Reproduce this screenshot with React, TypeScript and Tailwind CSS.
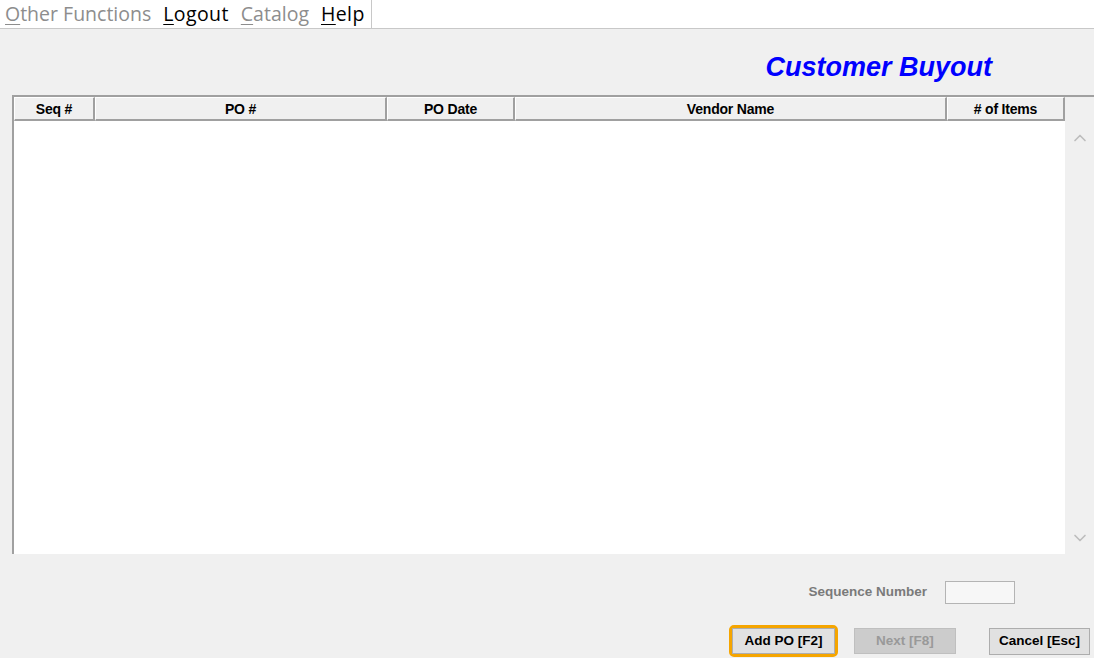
import React from 'react';
import { ChevronUp, ChevronDown } from 'lucide-react';

const menu = [
  { key: 'O', rest: 'ther Functions', enabled: false },
  { key: 'L', rest: 'ogout', enabled: true },
  { key: 'C', rest: 'atalog', enabled: false },
  { key: 'H', rest: 'elp', enabled: true },
];

const columns = [
  { label: 'Seq #', w: 'w-[81px]' },
  { label: 'PO #', w: 'w-[292px]' },
  { label: 'PO Date', w: 'w-[128px]' },
  { label: 'Vendor Name', w: 'w-[432px]' },
  { label: '# of Items', w: 'w-[118px]' },
];

const App: React.FC = () => {
  return (
    <div className="flex h-[658px] w-[1094px] flex-col overflow-hidden bg-[#f0f0f0] font-['Liberation_Sans',Arial,sans-serif]">
      {/* menu bar */}
      <div className="flex h-[29px] shrink-0 items-center border-b border-[#c8c8c8] bg-white font-['Open_Sans',sans-serif] text-[19.5px]">
        <div className="flex h-full items-center gap-[12px] border-r border-[#c8c8c8] pr-[6px] pl-[5px]">
          {menu.map((m) => (
            <span
              key={m.key}
              className={m.enabled ? 'tracking-[0.4px] text-black' : 'text-[#8d8d8d]'}
            >
              <span className="underline underline-offset-[3px]">{m.key}</span>
              {m.rest}
            </span>
          ))}
        </div>
      </div>

      {/* title */}
      <div className="flex h-[66px] shrink-0 items-end justify-end pr-[102px] pb-[14px]">
        <h1 className="text-[27px] leading-none font-bold text-[#0000ff] italic">Customer Buyout</h1>
      </div>

      {/* table */}
      <div className="ml-[12px] flex h-[459px] shrink-0 flex-col border-t-2 border-l-2 border-[#a0a0a0]">
        <div className="flex h-[24px] shrink-0">
          {columns.map((c) => (
            <div
              key={c.label}
              className={`${c.w} flex items-center justify-center border-t border-r-2 border-b-2 border-l border-t-white border-r-[#a0a0a0] border-b-[#a0a0a0] border-l-white pt-[1px] text-[14px] font-bold tracking-[-0.2px] text-black`}
            >
              {c.label}
            </div>
          ))}
        </div>
        <div className="flex flex-1">
          <div className="w-[1051px] bg-white" />
          <div className="flex flex-1 flex-col items-center justify-between pt-[7px] pb-[6px] text-[#bdbdbd]">
            <ChevronUp size={20} strokeWidth={2} />
            <ChevronDown size={20} strokeWidth={2} />
          </div>
        </div>
      </div>

      {/* sequence number */}
      <div className="mt-[27px] flex items-center justify-end pr-[79px]">
        <span className="text-[13.5px] font-bold text-[#7a7a7a]">Sequence Number</span>
        <div className="ml-[18px] h-[23px] w-[70px] border border-[#b4b4b4] bg-[#f7f7f7]" />
      </div>

      {/* buttons */}
      <div className="mt-[21px] flex items-center justify-end pr-[4px]">
        <div className="rounded-[5px] border-[3px] border-[#f5a500]">
          <button className="h-[26px] w-[103px] border border-[#adadad] bg-[#e1e1e1] text-[13.5px] font-bold text-black">
            Add PO [F2]
          </button>
        </div>
        <button className="ml-[16px] h-[26px] w-[102px] border border-[#bfbfbf] bg-[#cccccc] text-[13.5px] font-bold text-[#999999]">
          Next [F8]
        </button>
        <button className="ml-[33px] h-[27px] w-[101px] border border-[#adadad] bg-[#e1e1e1] text-[13.5px] font-bold text-black">
          Cancel [Esc]
        </button>
      </div>
    </div>
  );
};

export default App;
